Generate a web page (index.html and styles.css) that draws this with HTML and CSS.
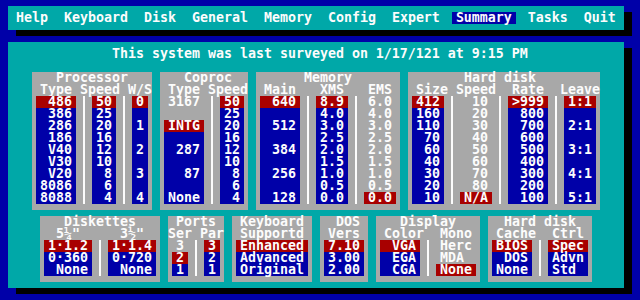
FILE: index.html
```html
<!DOCTYPE html>
<html lang="en">

<head>
	<meta charset="UTF-8">
	<title>Summary</title>
	<link rel="stylesheet" href="styles.css">
</head>

<body>
	<div class="menu">
		<span>Help</span>
		<span>Keyboard</span>
		<span>Disk</span>
		<span>General</span>
		<span>Memory</span>
		<span>Config</span>
		<span>Expert</span>
		<span class="on">Summary</span>
		<span>Tasks</span>
		<span>Quit</span>
	</div>

	<div class="panel">
		<div class="survey">This system was last surveyed on 1/17/121 at 9:15 PM</div>

		<div class="row top">
			<div class="box">
				<div class="title p24">Processor</div>
				<div class="head p8">Type Speed W/S</div>
				<div class="cols">
					<div class="col bar w40">
						<div class="r">486</div><div>386</div><div>286</div><div>186</div><div>V40</div><div>V30</div><div>V20</div><div>8086</div><div>8088</div>
					</div>
					<div class="sep"></div>
					<div class="col bar w24">
						<div class="r">50</div><div>25</div><div>20</div><div>16</div><div>12</div><div>10</div><div>8</div><div>6</div><div>4</div>
					</div>
					<div class="sep"></div>
					<div class="col bar w16">
						<div class="r">0</div><div></div><div>1</div><div></div><div>2</div><div></div><div>3</div><div></div><div>4</div>
					</div>
				</div>
			</div>

			<div class="box">
				<div class="title p24">Coproc</div>
				<div class="head p8">Type Speed</div>
				<div class="cols">
					<div class="col bar w40">
						<div class="g">3167</div><div class="g"></div><div class="r">INTG</div><div></div><div>287</div><div></div><div>87</div><div></div><div>None</div>
					</div>
					<div class="sep"></div>
					<div class="col bar w24">
						<div class="r">50</div><div>25</div><div>20</div><div>16</div><div>12</div><div>10</div><div>8</div><div>6</div><div>4</div>
					</div>
				</div>
			</div>

			<div class="box">
				<div class="title p48">Memory</div>
				<div class="head p8">Main   XMS   EMS</div>
				<div class="cols">
					<div class="col bar w40">
						<div class="r">640</div><div></div><div>512</div><div></div><div>384</div><div></div><div>256</div><div></div><div>128</div>
					</div>
					<div class="sep"></div>
					<div class="col bar w32">
						<div class="r">8.9</div><div>4.0</div><div>3.0</div><div>2.5</div><div>2.0</div><div>1.5</div><div>1.0</div><div>0.5</div><div>0.0</div>
					</div>
					<div class="sep"></div>
					<div class="col w32">
						<div>6.0</div><div>4.0</div><div>3.0</div><div>2.5</div><div>2.0</div><div>1.5</div><div>1.0</div><div>0.5</div><div class="r">0.0</div>
					</div>
				</div>
			</div>

			<div class="box">
				<div class="title p56">Hard disk</div>
				<div class="head p8">Size Speed  Rate  Leave</div>
				<div class="cols">
					<div class="col bar w32">
						<div class="r">412</div><div>160</div><div>110</div><div>70</div><div>60</div><div>40</div><div>30</div><div>20</div><div>10</div>
					</div>
					<div class="sep"></div>
					<div class="col w32">
						<div>10</div><div>20</div><div>30</div><div>40</div><div>50</div><div>60</div><div>70</div><div>80</div><div class="r">N/A</div>
					</div>
					<div class="sep"></div>
					<div class="col bar w40">
						<div class="r">&gt;999</div><div>800</div><div>700</div><div>600</div><div>500</div><div>400</div><div>300</div><div>200</div><div>100</div>
					</div>
					<div class="sep"></div>
					<div class="col bar w32">
						<div class="r">1:1</div><div></div><div>2:1</div><div></div><div>3:1</div><div></div><div>4:1</div><div></div><div>5:1</div>
					</div>
				</div>
			</div>
		</div>

		<div class="row bottom">
			<div class="box">
				<div class="title p24">Diskettes</div>
				<div class="head p16">5¼"     3½"</div>
				<div class="cols">
					<div class="col bar w48">
						<div class="r">1·1.2</div><div>0·360</div><div>None</div>
					</div>
					<div class="sep"></div>
					<div class="col bar w48">
						<div class="r">1·1.4</div><div>0·720</div><div>None</div>
					</div>
				</div>
			</div>

			<div class="box">
				<div class="title p8">Ports</div>
				<div class="head">Ser Par</div>
				<div class="cols">
					<div class="col bar w16">
						<div class="g">3</div><div class="r">2</div><div>1</div>
					</div>
					<div class="sep"></div>
					<div class="col bar w16">
						<div class="r">3</div><div>2</div><div>1</div>
					</div>
				</div>
			</div>

			<div class="box">
				<div class="title p8">Keyboard</div>
				<div class="head p8">Supportd</div>
				<div class="cols">
					<div class="col bar w72">
						<div class="r">Enhanced</div><div>Advanced</div><div>Original</div>
					</div>
				</div>
			</div>

			<div class="box">
				<div class="title p16">DOS</div>
				<div class="head p8">Vers</div>
				<div class="cols">
					<div class="col bar w40">
						<div class="r">7.10</div><div>3.00</div><div>2.00</div>
					</div>
				</div>
			</div>

			<div class="box">
				<div class="title p24">Display</div>
				<div class="head p8">Color  Mono</div>
				<div class="cols">
					<div class="col bar w40">
						<div class="r">VGA</div><div>EGA</div><div>CGA</div>
					</div>
					<div class="sep"></div>
					<div class="col left w40">
						<div>Herc</div><div>MDA</div><div class="r">None</div>
					</div>
				</div>
			</div>

			<div class="box">
				<div class="title p16">Hard disk</div>
				<div class="head p8">Cache  Ctrl</div>
				<div class="cols">
					<div class="col bar w40">
						<div class="r">BIOS</div><div>DOS</div><div>None</div>
					</div>
					<div class="sep"></div>
					<div class="col bar left w40">
						<div class="r">Spec</div><div>Advn</div><div>Std</div>
					</div>
				</div>
			</div>
		</div>
	</div>
</body>

</html>
```

FILE: styles.css
```css
* {
	margin: 0;
	padding: 0;
	box-sizing: border-box;
}

body {
	width: 640px;
	height: 300px;
	overflow: hidden;
	background: #0000a8;
	color: #fcfcfc;
	font: bold 13.29px/12px "DejaVu Sans Mono", monospace;
}

/* top menu bar */
.menu {
	display: flex;
	gap: 8px;
	width: 616px;
	height: 24px;
	margin: 6px 0 0 8px;
	padding: 6px 4px;
	background: #00a8a8;
	box-shadow: 8px 6px 0 #000;
}

.menu span {
	height: 12px;
	padding: 0 4px;
	white-space: pre;
}

.menu .on {
	background: #0000a8;
}

/* main window */
.panel {
	width: 616px;
	height: 246px;
	margin: 12px 0 0 8px;
	padding-top: 6px;
	background: #00a8a8;
	box-shadow: 8px 6px 0 #000;
}

.survey {
	height: 12px;
	padding-left: 104px;
	white-space: pre;
}

.row {
	display: flex;
	gap: 8px;
}

.row.top {
	margin: 12px 0 0 24px;
}

.row.bottom {
	margin: 6px 0 0 32px;
}

.box {
	flex: none;
	padding-bottom: 6px;
	background: #a8a8a8;
}

.title,
.head {
	height: 12px;
	white-space: pre;
}

.p8 { padding-left: 8px; }
.p16 { padding-left: 16px; }
.p24 { padding-left: 24px; }
.p48 { padding-left: 48px; }
.p56 { padding-left: 56px; }

.cols {
	display: flex;
	padding: 0 4px;
}

.col div {
	height: 12px;
	padding: 0 4px;
	text-align: right;
	white-space: pre;
}

.bar div {
	background: #0000a8;
}

.col .r {
	background: #a80000;
}

.col .g {
	background: none;
}

.left div {
	text-align: left;
}

.w16 { width: 16px; }
.w24 { width: 24px; }
.w32 { width: 32px; }
.w40 { width: 40px; }
.w48 { width: 48px; }
.w72 { width: 72px; }

/* thin vertical rule between columns */
.sep {
	width: 2px;
	margin: 0 7px;
	background: #fcfcfc;
}
```
